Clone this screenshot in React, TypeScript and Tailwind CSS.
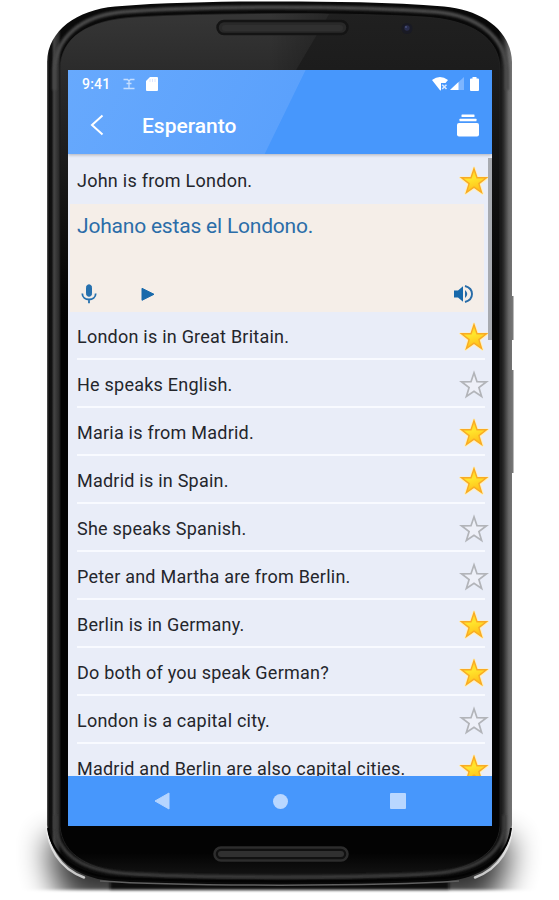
type Phrase = {
  text: string;
  starred: boolean;
};

const phrases: Phrase[] = [
  { text: 'London is in Great Britain.', starred: true },
  { text: 'He speaks English.', starred: false },
  { text: 'Maria is from Madrid.', starred: true },
  { text: 'Madrid is in Spain.', starred: true },
  { text: 'She speaks Spanish.', starred: false },
  { text: 'Peter and Martha are from Berlin.', starred: false },
  { text: 'Berlin is in Germany.', starred: true },
  { text: 'Do both of you speak German?', starred: true },
  { text: 'London is a capital city.', starred: false },
  { text: 'Madrid and Berlin are also capital cities.', starred: true },
];

const Star = ({ filled }: { filled: boolean }) => (
  <svg className="h-8 w-8 shrink-0" viewBox="0 0 32 32">
    <defs>
      <linearGradient id="gold" x1="0" y1="0" x2="0.3" y2="1">
        <stop offset="0" stopColor="#ffce20" />
        <stop offset="0.5" stopColor="#ffe52c" />
        <stop offset="1" stopColor="#ffc01a" />
      </linearGradient>
    </defs>
    {filled && (
      <path
        d="M16 3 L19.3 12.6 L29.5 12.8 L21.4 19 L24.4 28.5 L16 22.8 L7.6 28.5 L10.6 19 L2.5 12.8 L12.7 12.6Z"
        fill="#ffeeb0"
        stroke="#fff0bd"
        strokeWidth="2.6"
        strokeLinejoin="round"
      />
    )}
    <path
      d="M16 3.8 L19 12.7 L28.5 12.8 L20.9 18.6 L23.6 27.5 L16 22.2 L8.4 27.5 L11.1 18.6 L3.5 12.8 L13 12.7Z"
      fill={filled ? 'url(#gold)' : '#eef0f8'}
      stroke={filled ? '#f9ab24' : '#b2b4b9'}
      strokeWidth={filled ? 1.4 : 1.7}
    />
  </svg>
);

const PhoneBody = () => (
  <svg className="absolute inset-0 h-[900px] w-[559px]" viewBox="0 0 559 900">
    <defs>
      <linearGradient id="rim" x1="47" x2="513" y1="0" y2="0" gradientUnits="userSpaceOnUse">
        <stop offset="0" stopColor="#5a5a5a" />
        <stop offset="0.004" stopColor="#0c0c0c" />
        <stop offset="0.01" stopColor="#111" />
        <stop offset="0.015" stopColor="#444" />
        <stop offset="0.025" stopColor="#2b2b2b" />
        <stop offset="0.03" stopColor="#0a0a0a" />
        <stop offset="0.97" stopColor="#090909" />
        <stop offset="0.98" stopColor="#2c2c2c" />
        <stop offset="0.991" stopColor="#686868" />
        <stop offset="1" stopColor="#777" />
      </linearGradient>
      <linearGradient id="face" x1="0" x2="0" y1="13" y2="888" gradientUnits="userSpaceOnUse">
        <stop offset="0" stopColor="#202020" />
        <stop offset="0.08" stopColor="#1b1b1b" />
        <stop offset="0.35" stopColor="#030303" />
        <stop offset="0.96" stopColor="#030303" />
        <stop offset="1" stopColor="#1c1c1c" />
      </linearGradient>
      <linearGradient id="shine" x1="0" x2="0" y1="13" y2="300" gradientUnits="userSpaceOnUse">
        <stop offset="0" stopColor="#363636" />
        <stop offset="0.2" stopColor="#2b2b2b" />
        <stop offset="1" stopColor="#030303" />
      </linearGradient>
      <linearGradient id="glareEnd" x1="270" x2="325" y1="0" y2="0" gradientUnits="userSpaceOnUse">
        <stop offset="0" stopColor="#000" stopOpacity="0" />
        <stop offset="1" stopColor="#000" stopOpacity="0.25" />
      </linearGradient>
      <filter id="soft" x="0" y="740" width="559" height="240" filterUnits="userSpaceOnUse">
        <feGaussianBlur stdDeviation="16 14" />
      </filter>
      <filter id="softEdge" x="0" y="740" width="559" height="160" filterUnits="userSpaceOnUse">
        <feGaussianBlur stdDeviation="1.8" />
      </filter>
      <filter id="softRim" x="-10%" y="-50%" width="120%" height="200%">
        <feGaussianBlur stdDeviation="1.1" />
      </filter>
      <clipPath id="floor">
        <rect x="0" y="760" width="559" height="130" />
      </clipPath>
    </defs>

    {/* Shadow on the floor */}
    <g filter="url(#softEdge)">
      <g clipPath="url(#floor)">
        <path d="M50 836 Q48 880 70 904 H488 Q510 880 508 836Z" fill="#000" opacity="0.8" filter="url(#soft)" />
        <path d="M110 880 H449 V894 H110Z" fill="#111" />
      </g>
    </g>

    {/* Light caught on the lower corners */}
    <path
      d="M47 826 C48 846 58 868 84 877.5 M512 826 C511 846 501 868 475 877.5"
      fill="none"
      stroke="#f4f4f4"
      strokeWidth="2.4"
      strokeLinecap="round"
      opacity="0.75"
    />

    {/* Side buttons */}
    <path d="M511 296 H513.5 V340 H511Z M511 370 H513.5 V473 H511Z" fill="#777" />

    <path
      d="M47 62 C48 30 77 10 115 6.5 C170 2 230 1.5 280 1.5 C330 1.5 390 2 444 6.5 C482 10 511 30 512 62 V825 C509 860 482 877 449 881 C390 889 170 889 110 881 C77 877 50 860 47 825Z"
      fill="url(#rim)"
    />
    <path
      d="M54.5 90 V70 C56 36 82 16 122 12 C200 5.5 359 5.5 437 12 C477 16 505 36 507 70 V90"
      fill="none"
      stroke="#484848"
      strokeWidth="4"
      filter="url(#softRim)"
    />
    <path
      d="M60 70 C60 38 87 20 135 17 C210 12.5 350 12.5 424 17 C472 20 500 38 500 70 V826 C498 855 470 870 424 875 C350 880 210 880 135 875 C89 870 62 855 60 826Z"
      fill="url(#face)"
      stroke="#252525"
      strokeWidth="0.8"
    />
    <path
      d="M60.5 70 C60 38 87 20 135 17.5 C195 14 270 13.5 329 14 L296 70 H68 V300 H60.5Z"
      fill="url(#shine)"
    />
    <path d="M270 14 H329 L296 70 H270Z" fill="url(#glareEnd)" />

    {/* Bottom rim */}
    <path
      d="M55.5 815 V828 C59 852 79 870 125 873.5 C190 878 370 878 434 873.5 C480 870 501 852 504.5 828 V815"
      fill="none"
      stroke="#3a3a3a"
      strokeWidth="3.5"
      filter="url(#softRim)"
    />
    <path
      d="M48 828 C52 857 77 875 115 878 C190 882.5 370 882.5 444 878 C482 875 508 857 511 828"
      fill="none"
      stroke="#030303"
      strokeWidth="2"
    />
    <path d="M100 881 C180 886.5 380 886.5 459 881" fill="none" stroke="#606060" strokeWidth="1.5" />

    {/* Earpiece and lower speaker */}
    <rect x="217.5" y="21" width="130" height="13" rx="6.5" fill="#292929" stroke="#141414" strokeWidth="2.5" />
    <rect x="222" y="25" width="121" height="6" rx="3" fill="#303030" />
    <rect x="214.5" y="847.5" width="133" height="13" rx="6.5" fill="#111" stroke="#2d2d2d" strokeWidth="2.5" />
    <rect x="218" y="851" width="126" height="6" rx="3" fill="#303030" />

    {/* Front camera */}
    <circle cx="407" cy="28.5" r="5.5" fill="#191a24" />
    <circle cx="407" cy="28" r="2.7" fill="#292d4c" />
    <circle cx="406" cy="27" r="1" fill="#474f79" />
  </svg>
);

const StatusBar = () => (
  <div className="flex h-[27px] items-center justify-between pl-[14px] pr-[13px]">
    <div className="flex items-center">
      <span className="w-[29px] text-[14px] leading-none font-medium tracking-[0.2px]">9:41</span>
      <svg className="ml-[12px] h-3 w-3" viewBox="0 0 12 12" fill="none" stroke="#c5deff" strokeWidth="1.3">
        <path d="M0.5 1.5 H4.5 L6 3 L7.5 1.5 H11.5 M0.5 10.5 H11.5 M3.5 5.5 H8.5 M6 3 V10.5" />
      </svg>
      <svg className="ml-[11px] h-[14px] w-3" viewBox="0 0 12 14">
        <path d="M4 0 H11 Q12 0 12 1 V13 Q12 14 11 14 H1 Q0 14 0 13 V4Z" fill="#fff" />
        <path d="M4 2 V5 M6.5 2 V5 M9 2 V5" stroke="#dce5ff" strokeWidth="1" />
      </svg>
    </div>
    <div className="flex items-center">
      <svg className="h-[14px] w-4" viewBox="0 0 16 14">
        <path d="M0 3 Q8 -3 16 3 L13.5 6 H9 V13.2 L8.2 13.5Z" fill="#fff" />
        <path d="M10.2 7.7 L14.5 12 M14.5 7.7 L10.2 12" stroke="#d7e8ff" strokeWidth="1.6" />
      </svg>
      <svg className="ml-[2px] h-[13px] w-[14px]" viewBox="0 0 14 13">
        <path d="M0 13 L14 0 V13Z" fill="#7db5ff" />
        <path d="M0 13 L8.5 5 V13Z" fill="#fff" />
      </svg>
      <svg className="ml-[6px] h-[14px] w-[9px]" viewBox="0 0 9 14">
        <path d="M2.5 0 H6.5 V1.5 H8 Q9 1.5 9 2.5 V13 Q9 14 8 14 H1 Q0 14 0 13 V2.5 Q0 1.5 1 1.5 H2.5Z" fill="#fff" />
      </svg>
    </div>
  </div>
);

const Header = () => (
  <header className="relative z-10 h-[84px] shrink-0 bg-[#4797fc] bg-[linear-gradient(116deg,#67a9fd_0%,#5ba1fc_51%,transparent_51.2%)] text-white shadow-[0_1px_3px_rgba(0,0,0,0.25)]">
    <StatusBar />
    <div className="flex h-[56px] items-center pr-[13px] pl-[22px]">
      <button aria-label="Back">
        <svg className="h-[22px] w-[14px]" viewBox="0 0 14 22" fill="none" stroke="#fff" strokeWidth="2">
          <path d="M12.5 1.5 L2 11 L12.5 20.5" />
        </svg>
      </button>
      <h1 className="ml-[38px] flex-1 pt-[2px] text-[21px] leading-none font-medium">Esperanto</h1>
      <button aria-label="Collections">
        <svg className="h-[23px] w-[22px]" viewBox="0 0 22 23" fill="#fff">
          <rect x="4.5" y="0.5" width="13" height="2.5" rx="0.5" />
          <rect x="2.5" y="4.7" width="17" height="2.5" rx="0.5" />
          <rect x="0" y="9" width="22" height="13.5" rx="2" />
        </svg>
      </button>
    </div>
  </header>
);

const Translation = () => (
  <section className="mr-2 ml-[2px] flex h-[108px] shrink-0 flex-col justify-between bg-[#f5eee8] pt-[9px] pr-[10px] pb-[7px] pl-[7px] text-[#2b6da8]">
    <p className="text-[21px] leading-[26px] tracking-[-0.2px] whitespace-nowrap">Johano estas el Londono.</p>
    <div className="flex items-center">
      <svg className="ml-[3px] h-[22px] w-[18px]" viewBox="0 0 18 22" fill="none" stroke="#2570ae">
        <rect x="6.5" y="1.8" width="5" height="11.5" rx="2.5" fill="#2570ae" />
        <path d="M2.3 10.5 C2.3 18.5 15.7 18.5 15.7 10.5 M9 16.5 V20.3" strokeWidth="1.8" />
      </svg>
      <svg className="ml-[43px] h-[14px] w-[14px]" viewBox="0 0 14 14">
        <path d="M1 1.3 L13 7.3 L1 13.3Z" fill="#1769ab" stroke="#1769ab" strokeLinejoin="round" />
      </svg>
      <svg className="ml-auto h-5 w-[21px]" viewBox="0 0 21 20" fill="none" stroke="#286ca8" strokeWidth="1.9">
        <path d="M1 6.5 H5 L10 2.3 V17.7 L5 13.5 H1Z" fill="#1769ab" stroke="none" />
        <path d="M12 2 Q19 4 19 10 Q19 16 12 18" />
        <path d="M12 6 Q16.5 10 12 14Z" fill="#286ca8" stroke="none" />
      </svg>
    </div>
  </section>
);

const NavBar = () => (
  <nav className="flex h-[50px] shrink-0 items-center bg-[#4797fc] pl-[86px]">
    <svg className="h-[18px] w-4" viewBox="0 0 16 18" fill="#b5d5ff">
      <path d="M15 1 V17 L1 9Z" stroke="#b5d5ff" strokeLinejoin="round" />
    </svg>
    <span className="ml-[103px] h-[15px] w-[15px] rounded-full bg-[#b9d7ff]" />
    <span className="ml-[102px] h-4 w-4 rounded-[1px] bg-[#b9d7ff]" />
  </nav>
);

const App = () => (
  <div className="relative h-[900px] w-[559px] overflow-hidden bg-white pt-[70px] pl-[68px] font-['Roboto',sans-serif]">
    <PhoneBody />
    <div className="relative flex h-[756px] w-[424px] flex-col overflow-hidden bg-[#e9edf8]">
      <Header />
      <main className="relative flex min-h-0 flex-1 flex-col overflow-hidden">
        <div className="flex h-[50px] shrink-0 items-center justify-between pt-[4px] pr-[2px] pl-[9px]">
          <span className="text-[18px] leading-6 tracking-[0.25px] text-[#24262c]">John is from London.</span>
          <Star filled />
        </div>
        <Translation />
        <ul className="shrink-0">
          {phrases.map((phrase) => (
            <li
              key={phrase.text}
              className="flex h-12 items-center justify-between bg-[linear-gradient(#f8faff,#f8faff)] bg-[length:408px_2px] bg-[position:9px_46px] bg-no-repeat pt-px pr-[2px] pl-[9px]"
            >
              <span className="text-[18px] leading-6 tracking-[0.23px] whitespace-nowrap text-[#24262c]">
                {phrase.text}
              </span>
              <Star filled={phrase.starred} />
            </li>
          ))}
        </ul>
        {/* Scroll thumb */}
        <div className="absolute top-1 right-0 h-[182px] w-1 bg-[#a8abb1]" />
      </main>
      <NavBar />
    </div>
  </div>
);

export default App;
